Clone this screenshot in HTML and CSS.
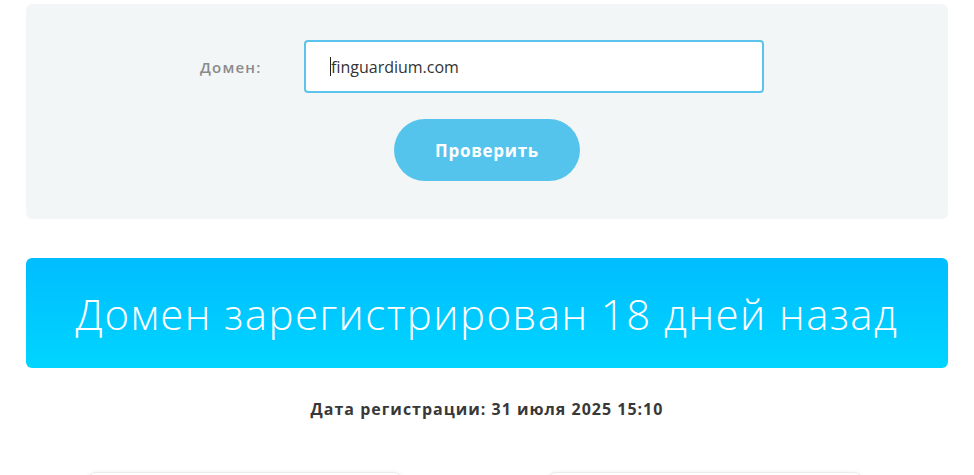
FILE: index.html
```html
<!DOCTYPE html>
<html lang="ru">
<head>
<meta charset="utf-8">
<title>Проверка домена</title>
<link rel="stylesheet" href="styles.css">
</head>
<body>
<div class="page">
  <section class="panel">
    <div class="form-row">
      <label class="label" for="domain">Домен:</label>
      <div class="input"><span class="caret"></span>finguardium.com</div>
    </div>
    <button class="btn" type="button">Проверить</button>
  </section>

  <section class="banner">Домен зарегистрирован 18 дней назад</section>

  <p class="date">Дата регистрации: 31 июля 2025 15:10</p>

  <div class="cards">
    <div class="card"></div>
    <div class="card"></div>
  </div>
</div>
</body>
</html>
```

FILE: styles.css
```css
* { box-sizing: border-box; }
html, body {
  margin: 0;
  padding: 0;
  background: #ffffff;
  font-family: "Open Sans", "Noto Sans", sans-serif;
  overflow: hidden;
}
.page {
  padding: 4px 26px 0 26px;
}
.panel {
  background: #f3f6f7;
  border-radius: 6px;
  padding: 36px 0 38px 0;
  display: flex;
  flex-direction: column;
  align-items: center;
  gap: 26px;
}
.form-row {
  display: flex;
  align-items: center;
  align-self: stretch;
  padding-left: 174px;
  gap: 41px;
}
.label {
  width: 63px;
  font-size: 15px;
  font-weight: 600;
  letter-spacing: 1.2px;
  color: #8b8b8b;
  white-space: nowrap;
}
.input {
  width: 460px;
  height: 53px;
  background: #fff;
  border: 2px solid #5cc3ec;
  border-radius: 4px;
  padding: 0 0 0 24px;
  display: flex;
  align-items: center;
  font-size: 16px;
  color: #333;
}
.caret {
  display: inline-block;
  width: 1px;
  height: 19px;
  background: #222;
}
.btn {
  width: 186px;
  height: 62px;
  border: none;
  border-radius: 31px;
  background: #55c4ec;
  color: #fff;
  font-family: inherit;
  font-size: 17px;
  font-weight: 700;
  letter-spacing: 0.7px;
}
.banner {
  margin-top: 39px;
  height: 110px;
  border-radius: 6px;
  background: linear-gradient(180deg, #00bdff 0%, #00d5ff 100%);
  color: #fff;
  display: flex;
  align-items: center;
  justify-content: center;
  font-size: 42px;
  font-weight: 300;
  letter-spacing: 1.45px;
}
.date {
  margin: 30px 0 0 0;
  text-align: center;
  font-size: 16px;
  font-weight: 700;
  letter-spacing: 1px;
  color: #383838;
}
.cards {
  margin-top: 52px;
  display: flex;
  gap: 146px;
  padding-left: 62px;
}
.card {
  width: 314px;
  height: 120px;
  border: 1px solid #ececec;
  border-radius: 8px;
  box-shadow: 0 0 4px rgba(0,0,0,0.06);
  background: #fff;
}
```
